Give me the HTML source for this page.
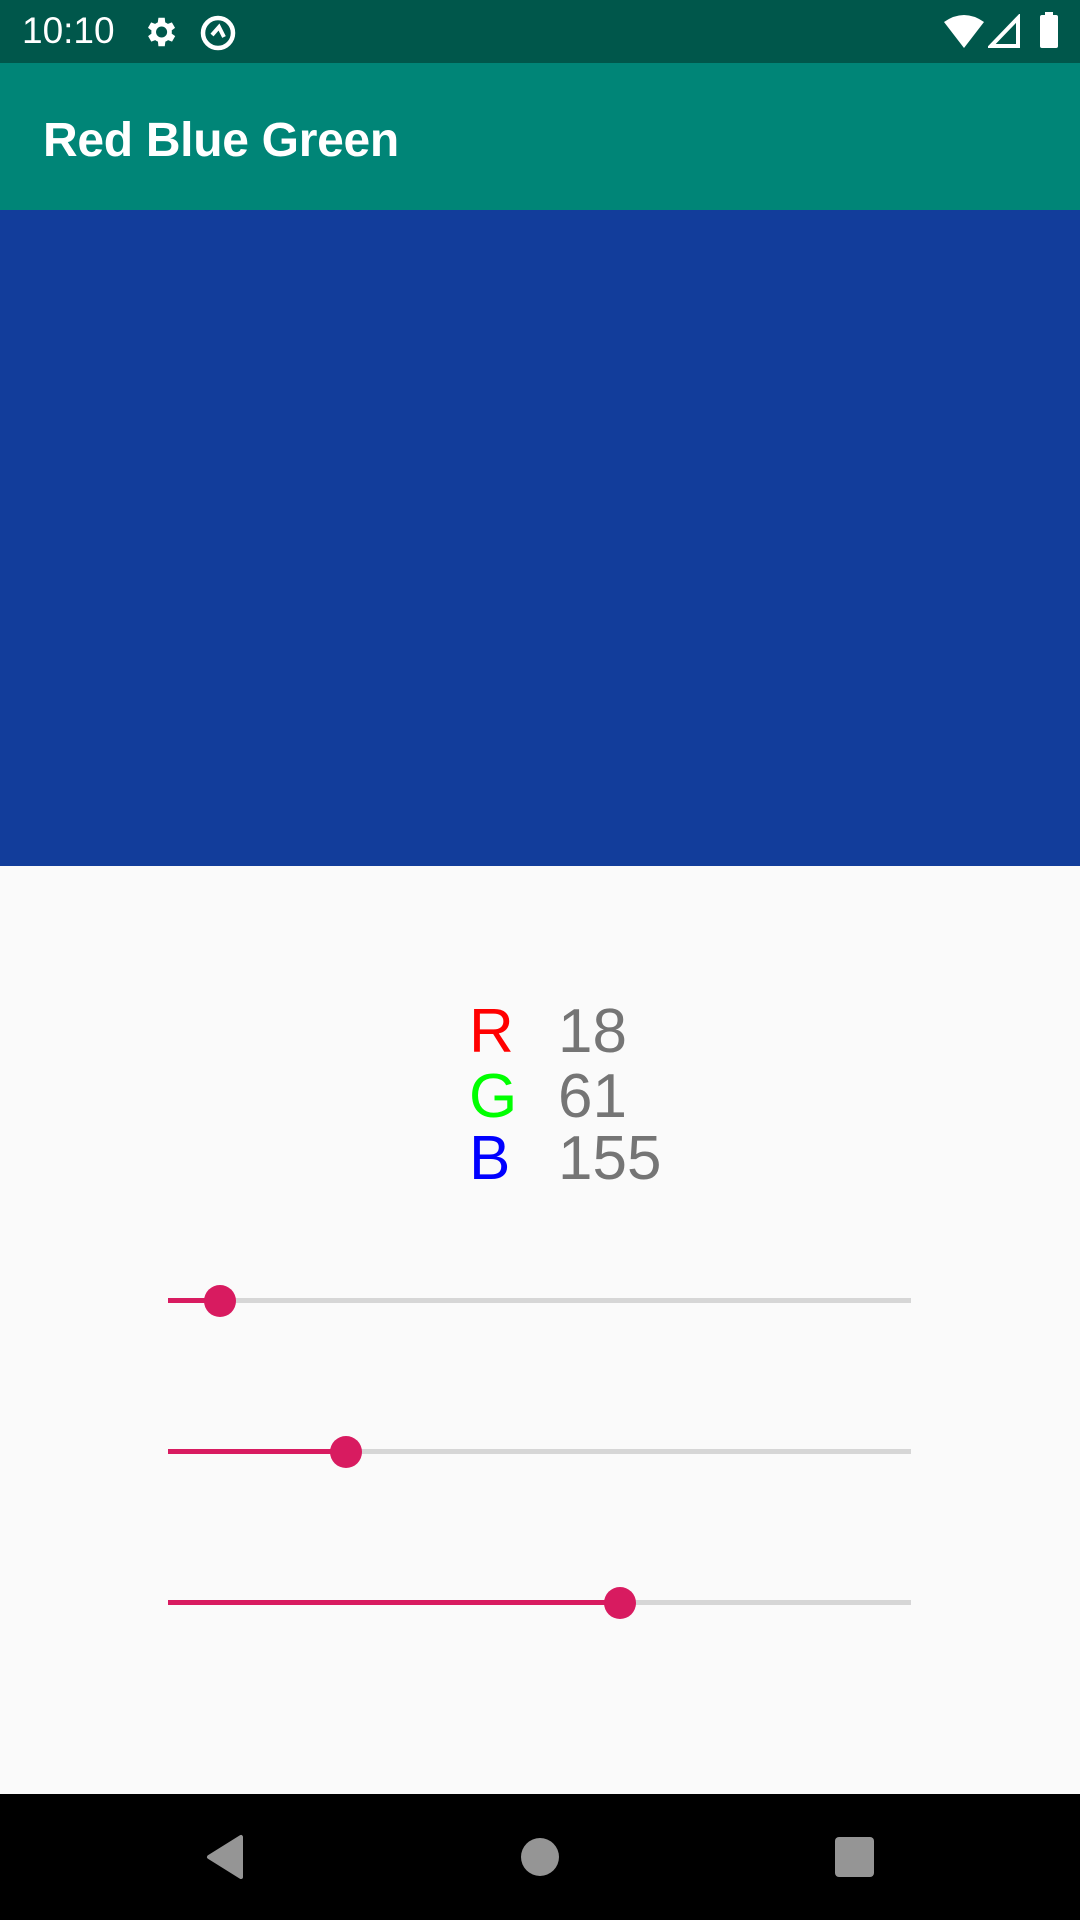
<!DOCTYPE html>
<html><head><meta charset="utf-8"><style>
*{margin:0;padding:0;box-sizing:border-box}
body{width:1080px;height:1920px;position:relative;background:#FAFAFA;font-family:"Liberation Sans",sans-serif;overflow:hidden}
.abs{position:absolute}
.track{position:absolute;left:168px;width:743px;height:5px;background:#D6D6D6}
.fill{position:absolute;left:0;top:0;height:5px;background:#D81B60}
.thumb{position:absolute;width:32px;height:32px;border-radius:50%;background:#D81B60;top:-13.5px}
.row{position:absolute;left:469px;font-size:62px;line-height:62px}
.row span{position:absolute;left:89px;color:#757575}
</style></head><body>
<div class="abs" style="left:0;top:0;width:1080px;height:63px;background:#00574B"></div>
<div class="abs" style="left:22px;top:11px;color:#fff;font-size:37px;line-height:40px">10:10</div>
<svg class="abs" style="left:141px;top:13px" width="38" height="38" viewBox="0 0 24 24"><path fill="#fff" d="M19.4 13a7.5 7.5 0 000-2l2.1-1.6-2-3.5-2.5 1a7 7 0 00-1.7-1L15 3h-4l-.4 2.9a7 7 0 00-1.7 1l-2.5-1-2 3.5L6.6 11a7.5 7.5 0 000 2l-2.1 1.6 2 3.5 2.5-1a7 7 0 001.7 1L11 21h4l.4-2.9a7 7 0 001.7-1l2.5 1 2-3.5zM13 15.5a3.5 3.5 0 110-7 3.5 3.5 0 010 7z"/></svg>
<svg class="abs" style="left:198px;top:13px" width="40" height="40" viewBox="0 0 40 40"><circle cx="20" cy="20" r="15" fill="none" stroke="#fff" stroke-width="4.5"/><path d="M14 22l7-8 5 10" fill="none" stroke="#fff" stroke-width="4"/></svg>
<svg class="abs" style="left:944px;top:14px" width="40" height="34" viewBox="0 0 40 34"><path fill="#fff" d="M0 8Q20-6 40 8L20 34z"/></svg>
<svg class="abs" style="left:988px;top:14px" width="32" height="34" viewBox="0 0 32 34"><path fill="none" stroke="#fff" stroke-width="4" d="M3 32L30 4V32Z"/></svg>
<div class="abs" style="left:1040px;top:15px;width:18px;height:33px;background:#fff;border-radius:2px"></div>
<div class="abs" style="left:1045px;top:12px;width:8px;height:4px;background:#fff"></div>
<div class="abs" style="left:0;top:63px;width:1080px;height:147px;background:#008577"></div>
<div class="abs" style="left:43px;top:111px;color:#fff;font-size:48px;font-weight:bold;line-height:60px;letter-spacing:-0.3px">Red Blue Green</div>
<div class="abs" style="left:0;top:210px;width:1080px;height:656px;background:#123D9B"></div>

<div class="row" style="top:1001px;color:#FF0000">R<span>18</span></div>
<div class="row" style="top:1066px;color:#00FF00">G<span>61</span></div>
<div class="row" style="top:1128px;color:#0000FF">B<span>155</span></div>

<div class="track" style="top:1298px"><div class="fill" style="width:52px"></div><div class="thumb" style="left:36px"></div></div>
<div class="track" style="top:1449px"><div class="fill" style="width:178px"></div><div class="thumb" style="left:162px"></div></div>
<div class="track" style="top:1600px"><div class="fill" style="width:452px"></div><div class="thumb" style="left:436px"></div></div>

<div class="abs" style="left:0;top:1794px;width:1080px;height:126px;background:#000"></div>
<svg class="abs" style="left:205px;top:1834px" width="40" height="46" viewBox="0 0 40 46"><path fill="#959595" stroke="#959595" stroke-width="4" stroke-linejoin="round" d="M36 3V43L4 23Z"/></svg>
<div class="abs" style="left:521px;top:1838px;width:38px;height:38px;border-radius:50%;background:#959595"></div>
<div class="abs" style="left:835px;top:1837px;width:39px;height:40px;border-radius:4px;background:#959595"></div>
</body></html>
